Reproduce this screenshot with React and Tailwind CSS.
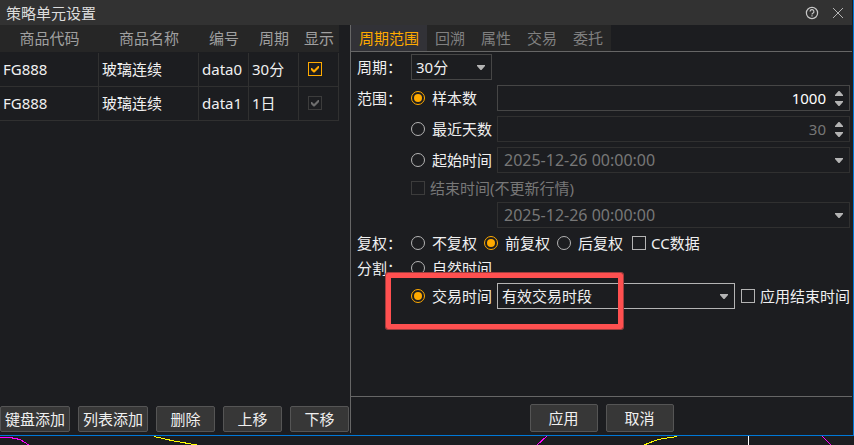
import React, { useState } from 'react';
import clsx from 'clsx';

const TABS = ['周期范围', '回溯', '属性', '交易', '委托'];

const INITIAL_ROWS = [
  { code: 'FG888', name: '玻璃连续', id: 'data0', period: '30分', visible: true, locked: false },
  { code: 'FG888', name: '玻璃连续', id: 'data1', period: '1日', visible: true, locked: true },
];

const Arrow = ({ up, className }) => (
  <svg width="8" height="5" viewBox="0 0 8 5" className={className} aria-hidden="true">
    <path d={up ? 'M0 5h8V4L4.5 0h-1L0 4z' : 'M0 0h8v1L4.5 5h-1L0 1z'} fill="#b4b4b4" />
  </svg>
);

const CheckBox = ({ label, disabled, className, ...props }) => (
  <label className={clsx('flex items-center gap-[5px] whitespace-nowrap', disabled && 'text-[#777777]', className)}>
    <span className="relative flex shrink-0">
      <input
        type="checkbox"
        disabled={disabled}
        className="peer size-3.5 appearance-none border border-[#b4b4b4] enabled:checked:border-[#ffaa00] disabled:border-[#3c3c3c]"
        {...props}
      />
      <svg
        viewBox="0 0 14 14"
        className={clsx('pointer-events-none absolute inset-0 hidden size-3.5 peer-checked:block', disabled ? 'text-[#6e6e6e]' : 'text-[#ffaa00]')}
      >
        <path d="M3 6h1l2 2 4-4h1v2l-4.5 4.5h-1L3 8z" fill="currentColor" />
      </svg>
    </span>
    {label}
  </label>
);

const Radio = ({ label, ...props }) => (
  <label className="flex items-center gap-[7px] whitespace-nowrap">
    <span className="relative flex shrink-0">
      <input
        type="radio"
        className="peer size-3.5 appearance-none rounded-full border border-[#b4b4b4] checked:border-[#ffaa00]"
        {...props}
      />
      <span className="pointer-events-none absolute inset-[3px] hidden rounded-full bg-[#ffaa00] peer-checked:block" />
    </span>
    {label}
  </label>
);

const SpinBox = ({ label, value, onChange, disabled }) => (
  <div className={clsx('flex h-[26px] items-center border', disabled ? 'border-[#303030] text-[#777777]' : 'border-[#464646] text-white')}>
    <input
      type="text"
      inputMode="numeric"
      aria-label={label}
      value={value}
      disabled={disabled}
      onChange={(e) => onChange(Number(e.target.value) || 0)}
      className="h-full min-w-0 flex-1 bg-transparent text-right outline-none"
    />
    <div className="mr-1.5 ml-[9px] flex flex-col gap-[5px]">
      <button type="button" aria-label="增加" disabled={disabled} onClick={() => onChange(value + 1)}>
        <Arrow up className="block" />
      </button>
      <button type="button" aria-label="减少" disabled={disabled} onClick={() => onChange(Math.max(0, value - 1))}>
        <Arrow className="block" />
      </button>
    </div>
  </div>
);

const DateBox = ({ label, value }) => (
  <div className="flex h-[26px] items-center border border-[#303030] text-[#777777]">
    <input
      type="text"
      aria-label={label}
      defaultValue={value}
      disabled
      className="h-full min-w-0 flex-1 bg-transparent pl-1.5 text-base outline-none"
    />
    <button type="button" aria-label="选择日期" disabled className="mr-1.5">
      <Arrow className="block" />
    </button>
  </div>
);

const Select = ({ label, options, className, selectClass }) => (
  <div className={clsx('relative', className)}>
    <select
      aria-label={label}
      className={clsx('h-[26px] w-full appearance-none border bg-[#1c1d20] pr-5 pl-1 outline-none', selectClass)}
    >
      {options.map((o) => (
        <option key={o}>{o}</option>
      ))}
    </select>
    <Arrow className="pointer-events-none absolute top-[11px] right-[7px]" />
  </div>
);

const Button = ({ children, className }) => (
  <button
    type="button"
    className={clsx('rounded-xs border border-[#555555] bg-[#373737] whitespace-nowrap hover:bg-[#444444]', className)}
  >
    {children}
  </button>
);

// Columns: caption, options, edit field
const FormRow = ({ caption, className, children }) => (
  <div className={clsx('flex items-center', className)}>
    <span className="w-[54px] shrink-0">{caption}</span>
    {children}
  </div>
);

const DataTable = () => {
  const [rows, setRows] = useState(INITIAL_ROWS);
  const toggle = (i) => setRows(rows.map((r, n) => (n === i ? { ...r, visible: !r.visible } : r)));
  const cell = 'border-r border-b border-[#303030] pb-0.5 pl-[3px]';

  return (
    <table className="w-[339px] table-fixed border-separate border-spacing-0">
      <colgroup>
        <col className="w-[99px]" />
        <col className="w-[100px]" />
        <col className="w-[50px]" />
        <col className="w-[50px]" />
        <col className="w-[40px]" />
      </colgroup>
      <thead>
        <tr className="h-7 bg-[#262626] text-[#a0a0a0]">
          {['商品代码', '商品名称', '编号', '周期', '显示'].map((h) => (
            <th key={h} className="border-b border-[#1c1d20] p-0 pb-0.5 font-normal">{h}</th>
          ))}
        </tr>
      </thead>
      <tbody>
        {rows.map((r, i) => (
          <tr key={r.id} className="h-[34px]">
            <td className={cell}>{r.code}</td>
            <td className={cell}>{r.name}</td>
            <td className={cell}>{r.id}</td>
            <td className={cell}>{r.period}</td>
            <td className="border-r border-b border-[#303030] pb-0.5 pl-[9px]">
              <CheckBox aria-label="显示" checked={r.visible} disabled={r.locked} onChange={() => toggle(i)} />
            </td>
          </tr>
        ))}
      </tbody>
    </table>
  );
};

const RangeForm = () => {
  const [range, setRange] = useState('count');
  const [adjust, setAdjust] = useState('前复权');
  const [split, setSplit] = useState('trade');
  const [count, setCount] = useState(1000);
  const [days, setDays] = useState(30);

  return (
    <div className="flex flex-1 flex-col gap-[5px] pt-0.5 pr-[3px] pl-1.5">
      <FormRow caption="周期：">
        <Select label="周期" options={['30分', '1日']} className="w-[81px]" selectClass="border-[#464646]" />
      </FormRow>

      <FormRow caption="范围：">
        <div className="w-[86px] shrink-0">
          <Radio name="range" label="样本数" checked={range === 'count'} onChange={() => setRange('count')} />
        </div>
        <div className="flex-1">
          <SpinBox label="样本数" value={count} onChange={setCount} disabled={range !== 'count'} />
        </div>
      </FormRow>
      <FormRow>
        <div className="w-[86px] shrink-0">
          <Radio name="range" label="最近天数" checked={range === 'days'} onChange={() => setRange('days')} />
        </div>
        <div className="flex-1">
          <SpinBox label="最近天数" value={days} onChange={setDays} disabled={range !== 'days'} />
        </div>
      </FormRow>
      <FormRow>
        <div className="w-[86px] shrink-0">
          <Radio name="range" label="起始时间" checked={range === 'start'} onChange={() => setRange('start')} />
        </div>
        <div className="flex-1">
          <DateBox label="起始时间" value="2025-12-26 00:00:00" />
        </div>
      </FormRow>
      <FormRow className="h-[19px]">
        <CheckBox label="结束时间(不更新行情)" disabled />
      </FormRow>
      <FormRow>
        <div className="ml-[86px] flex-1">
          <DateBox label="结束时间" value="2025-12-26 00:00:00" />
        </div>
      </FormRow>

      <FormRow caption="复权：" className="h-[19px]">
        <div className="flex gap-[7px]">
          {['不复权', '前复权', '后复权'].map((a) => (
            <Radio key={a} name="adjust" label={a} checked={adjust === a} onChange={() => setAdjust(a)} />
          ))}
          <CheckBox label="CC数据" className="pl-0.5" />
        </div>
      </FormRow>

      <FormRow caption="分割：" className="h-[21px]">
        <Radio name="split" label="自然时间" checked={split === 'natural'} onChange={() => setSplit('natural')} />
      </FormRow>
      <FormRow>
        <div className="relative flex flex-1 items-center">
          <div className="w-[86px] shrink-0">
            <Radio name="split" label="交易时间" checked={split === 'trade'} onChange={() => setSplit('trade')} />
          </div>
          <Select label="交易时段" options={['有效交易时段', '全部交易时段']} className="flex-1" selectClass="border-[#b4b4b4]" />
          <CheckBox label="应用结束时间" className="pl-1.5" />
          {/* red callout around the trading-time option */}
          <div className="pointer-events-none absolute -top-2.5 -left-[25px] h-14 w-[237px] rounded-xs border-5 border-[#ff5050] ring-1 ring-[#a03c3c]" />
        </div>
      </FormRow>
    </div>
  );
};

const App = () => {
  const [tab, setTab] = useState(TABS[0]);

  return (
    <div className="flex min-h-screen flex-col bg-[#1c1d20] font-['Noto_Sans','Noto_Sans_CJK_SC',sans-serif] text-[15px] leading-5 text-[#f0f0f0]">
      <div className="flex flex-1 flex-col border-r border-b border-[#0078d7] pb-0.5">
        <header className="mr-px flex h-[25px] items-center bg-[#323232] pr-2 pl-1.5">
          <h1 className="flex-1 text-[#dcdcdc]">策略单元设置</h1>
          <button type="button" aria-label="帮助" className="mr-[13px]">
            <svg width="14" height="14" viewBox="0 0 14 14" fill="none" stroke="#c8c8c8" strokeWidth="1.2">
              <circle cx="7" cy="7" r="5.6" />
              <path d="M5.1 5.6a1.9 1.9 0 1 1 2.8 1.6c-.6.35-.9.6-.9 1.2M7 9.3v1.2" />
            </svg>
          </button>
          <button type="button" aria-label="关闭">
            <svg width="12" height="12" viewBox="0 0 12 12" fill="none" stroke="#b4b4b4">
              <path d="M1 1l10 10M11 1L1 11" />
            </svg>
          </button>
        </header>

        <main className="flex flex-1">
          <section className="flex w-[350px] shrink-0 flex-col justify-between">
            <DataTable />
            <div className="flex gap-2 pb-px">
              <Button className="h-[26px] w-[70px]">键盘添加</Button>
              <Button className="h-[26px] w-[70px]">列表添加</Button>
              <Button className="h-[26px] w-[59px]">删除</Button>
              <Button className="h-[26px] w-[59px]">上移</Button>
              <Button className="h-[26px] w-[59px]">下移</Button>
            </div>
          </section>

          <section className="flex flex-1 flex-col border-l border-[#666666]">
            <nav role="tablist" className="mr-px flex h-[27px] border-b border-[#666666]">
              {TABS.map((t) => (
                <button
                  key={t}
                  type="button"
                  role="tab"
                  aria-selected={t === tab}
                  onClick={() => setTab(t)}
                  className={clsx('px-2', t === tab ? 'bg-[#323237] text-[#ffaa00]' : 'bg-[#262626] text-[#808080]')}
                >
                  {t}
                </button>
              ))}
            </nav>
            <RangeForm />
            <footer className="mr-px flex justify-center gap-2 border-t border-[#666666] pt-[7px] pb-px">
              <Button className="h-7 w-[68px]">应用</Button>
              <Button className="h-7 w-[68px]">取消</Button>
            </footer>
          </section>
        </main>
      </div>

      {/* chart behind the dialog */}
      <svg viewBox="0 0 854 9" preserveAspectRatio="none" className="h-[9px] w-full" fill="none" shapeRendering="crispEdges">
        <path d="M0 1.5h10l10 2 9 5.5M537 9l10-9M822 0l9 9" stroke="#ff00ff" />
        <path d="M154 .5l20 4.5 23 4M644 9l14-5.5 19-3" stroke="#ffff00" />
        <path d="M748.5 0v9" stroke="#ffffff" />
      </svg>
    </div>
  );
};

export default App;
